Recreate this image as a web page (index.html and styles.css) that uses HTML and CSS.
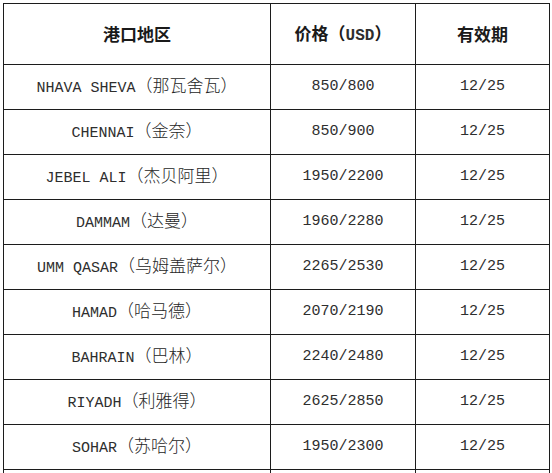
FILE: index.html
```html
<!DOCTYPE html>
<html lang="zh">
<head>
<meta charset="utf-8">
<link rel="stylesheet" href="styles.css">
</head>
<body>
<table class="rates">
  <colgroup>
    <col class="c-port">
    <col class="c-price">
    <col class="c-valid">
  </colgroup>
  <thead>
    <tr>
      <th>港口地区</th>
      <th>价格（<span class="lat">USD</span>）</th>
      <th>有效期</th>
    </tr>
  </thead>
  <tbody>
    <tr><td><span class="lat">NHAVA SHEVA</span>（那瓦舍瓦）</td><td class="lat">850/800</td><td class="lat">12/25</td></tr>
    <tr><td><span class="lat">CHENNAI</span>（金奈）</td><td class="lat">850/900</td><td class="lat">12/25</td></tr>
    <tr><td><span class="lat">JEBEL ALI</span>（杰贝阿里）</td><td class="lat">1950/2200</td><td class="lat">12/25</td></tr>
    <tr><td><span class="lat">DAMMAM</span>（达曼）</td><td class="lat">1960/2280</td><td class="lat">12/25</td></tr>
    <tr><td><span class="lat">UMM QASAR</span>（乌姆盖萨尔）</td><td class="lat">2265/2530</td><td class="lat">12/25</td></tr>
    <tr><td><span class="lat">HAMAD</span>（哈马德）</td><td class="lat">2070/2190</td><td class="lat">12/25</td></tr>
    <tr><td><span class="lat">BAHRAIN</span>（巴林）</td><td class="lat">2240/2480</td><td class="lat">12/25</td></tr>
    <tr><td><span class="lat">RIYADH</span>（利雅得）</td><td class="lat">2625/2850</td><td class="lat">12/25</td></tr>
    <tr><td><span class="lat">SOHAR</span>（苏哈尔）</td><td class="lat">1950/2300</td><td class="lat">12/25</td></tr>
    <tr class="cut"><td></td><td></td><td></td></tr>
  </tbody>
</table>
</body>
</html>
```
FILE: styles.css
```css
html, body {
  margin: 0;
  padding: 0;
  background: #ffffff;
}
body {
  width: 552px;
  height: 473px;
  overflow: hidden;
}
.rates {
  margin: 3px 0 0 3px;
  border-collapse: collapse;
  table-layout: fixed;
  width: 546px;
  font-family: "Noto Sans CJK SC", sans-serif;
  font-size: 17px;
  font-weight: 300;
  color: #262626;
}
.c-port { width: 267px; }
.c-price { width: 145px; }
.c-valid { width: 134px; }
.rates th,
.rates td {
  border: 1px solid #1c1c1c;
  padding: 0;
  text-align: center;
  vertical-align: middle;
  line-height: 20px;
}
.rates th {
  height: 60px;
  font-weight: 700;
  color: #1a1a1a;
}
.rates th .lat {
  font-size: 16px;
  font-weight: 700;
}
.rates td {
  height: 44px;
}
.lat {
  font-family: "Liberation Mono", monospace;
  font-size: 15px;
  font-weight: 400;
  color: #2e2e2e;
}
.rates tr.cut td {
  height: 20px;
}
```
